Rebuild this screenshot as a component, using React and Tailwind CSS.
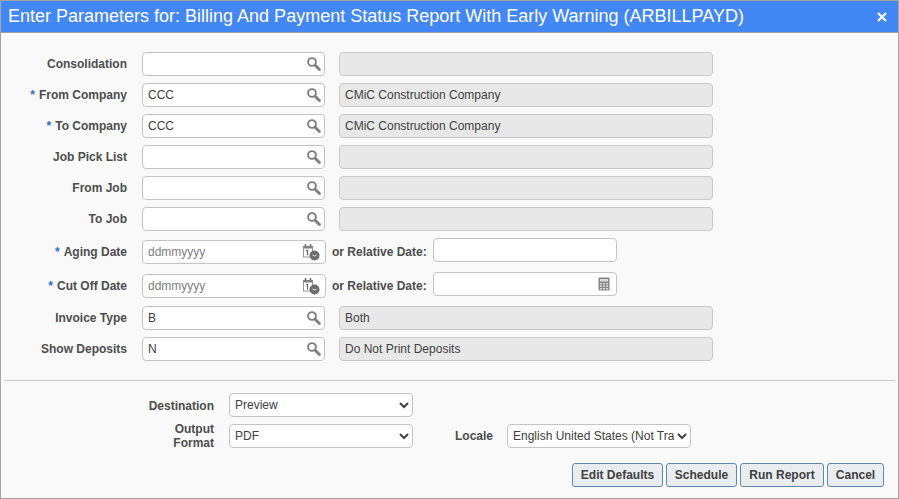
// Report parameter dialog: lookup fields, date fields, output options.
const LABEL = "text-[12px] leading-[14px] font-bold text-[#4d4d4d] text-right";
const FIELD = "h-[24px] bg-white border border-[#c4c4c4] rounded-[4px] flex items-center text-[12px] text-[#404040]";
const BTN = "h-[24px] bg-[#eaedf0] border border-[#5f88a8] rounded-[3px] text-[12px] font-bold text-[#404040] flex items-center justify-center";

const SearchIcon = () => (
  <svg width="14" height="14" viewBox="0 0 14 14" className="flex-shrink-0">
    <circle cx="5" cy="5" r="3.9" fill="none" stroke="#7d7d7d" strokeWidth="1.9"/>
    <path d="M8.2 8.2l4.2 4.2" stroke="#7d7d7d" strokeWidth="2.8" strokeLinecap="round"/>
  </svg>
);

const DateIcon = () => (
  <svg width="17" height="17" viewBox="0 0 17 17" className="flex-shrink-0">
    <rect x="0.5" y="2.5" width="9" height="10.5" fill="none" stroke="#949494" strokeWidth="1"/>
    <path d="M0.5 3.5h9" stroke="#808080" strokeWidth="2"/>
    <path d="M2.5 0v3M7.5 0v3" stroke="#6f6f6f" strokeWidth="1.6"/>
    <path d="M3 7l1.6-1v5.5" fill="none" stroke="#555" strokeWidth="1"/>
    <circle cx="11.5" cy="11.5" r="5" fill="#6e6e6e"/>
    <path d="M9.5 11l2 1 2-.7" fill="none" stroke="#e4e4e4" strokeWidth="1"/>
  </svg>
);

const CalcIcon = () => (
  <svg width="12" height="14" viewBox="0 0 12 14" className="flex-shrink-0">
    <rect x="0.5" y="0.5" width="11" height="13" rx="1" fill="#858585"/>
    <rect x="2" y="2" width="8" height="2.5" fill="#dcdcdc"/>
    <path d="M2 6h2v1.5H2zM5 6h2v1.5H5zM8 6h2v1.5H8zM2 8.5h2V10H2zM5 8.5h2V10H5zM8 8.5h2V10H8zM2 11h2v1.5H2zM5 11h2v1.5H5zM8 11h2v1.5H8z" fill="#dcdcdc"/>
  </svg>
);

const Label = ({ req, children }) => (
  <div className={"w-[126px] flex-shrink-0 " + LABEL}>
    {req && <span className="text-[#2f6fd0] mr-[4px]">*</span>}{children}
  </div>
);

const LookupRow = ({ label, req, value, desc, className }) => (
  <div className={"flex items-center " + (className || "")}>
    <Label req={req}>{label}</Label>
    <div className={"ml-[15px] w-[183px] pl-[5px] pr-[3px] justify-between " + FIELD}>
      <span>{value}</span>
      <SearchIcon/>
    </div>
    <div className="ml-[14px] w-[374px] h-[24px] bg-[#e8e8e8] border border-[#c9c9c9] rounded-[4px] flex items-center px-[5px] text-[12px] text-[#404040]">{desc}</div>
  </div>
);

const DateRow = ({ label, calc, className }) => (
  <div className={"flex items-center " + (className || "")}>
    <Label req>{label}</Label>
    <div className={"ml-[15px] w-[184px] pl-[5px] pr-[5px] justify-between " + FIELD}>
      <span className="text-[#808080]">ddmmyyyy</span>
      <DateIcon/>
    </div>
    <div className={"ml-[6px] w-[95px] " + LABEL + " !text-left"}>or Relative Date:</div>
    <div className={"ml-[6px] w-[184px] -mt-[4px] justify-end pr-[6px] " + FIELD}>
      {calc && <CalcIcon/>}
    </div>
  </div>
);

const Select = ({ value, options, className }) => (
  <select defaultValue={value} className={"w-[184px] h-[24px] bg-white border border-[#c4c4c4] rounded-[4px] pl-[1px] text-[12px] text-[#404040] " + (className || "")} style={{ fontFamily: '"Liberation Sans", Arial, sans-serif' }}>
    {options.map(o => <option key={o}>{o}</option>)}
  </select>
);

export default function App() {
  return (
    <div className="w-[899px] h-[499px] bg-[#f9f9f9] border border-[#a3a3a3] flex flex-col overflow-hidden font-['Liberation_Sans',Arial,sans-serif]">
      <div className="h-[32px] flex-shrink-0 bg-[#4387f4] border-b border-[#a0a0a0] flex items-center justify-between pl-[7px] pr-[11px]">
        <span className="text-[18px] text-white whitespace-nowrap">Enter Parameters for: Billing And Payment Status Report With Early Warning (ARBILLPAYD)</span>
        <svg width="10" height="10" viewBox="0 0 10 10"><path d="M1 1l8 8M9 1l-8 8" stroke="#fff" strokeWidth="2.2"/></svg>
      </div>

      <div className="flex flex-col pt-[19px]">
        <LookupRow label="Consolidation"/>
        <LookupRow label="From Company" req value="CCC" desc="CMiC Construction Company" className="mt-[7px]"/>
        <LookupRow label="To Company" req value="CCC" desc="CMiC Construction Company" className="mt-[7px]"/>
        <LookupRow label="Job Pick List" className="mt-[7px]"/>
        <LookupRow label="From Job" className="mt-[7px]"/>
        <LookupRow label="To Job" className="mt-[7px]"/>
        <DateRow label="Aging Date" className="mt-[9px]"/>
        <DateRow label="Cut Off Date" calc className="mt-[10px]"/>
        <LookupRow label="Invoice Type" value="B" desc="Both" className="mt-[8px]"/>
        <LookupRow label="Show Deposits" value="N" desc="Do Not Print Deposits" className="mt-[7px]"/>
      </div>

      <div className="mt-[19px] mx-[3px] border-t border-[#c8c8c8]"/>

      <div className="flex items-center mt-[12px]">
        <div className={"w-[213px] flex-shrink-0 pt-[2px] " + LABEL}>Destination</div>
        <Select value="Preview" options={["Preview", "Print", "Email"]} className="ml-[15px]"/>
      </div>
      <div className="flex items-center mt-[5px]">
        <div className={"w-[213px] flex-shrink-0 " + LABEL}>Output<br/>Format</div>
        <Select value="PDF" options={["PDF", "Excel", "HTML"]} className="ml-[15px]"/>
        <div className={"ml-[41px] w-[39px] " + LABEL}>Locale</div>
        <Select value="English United States (Not Translated)" options={["English United States (Not Translated)"]} className="ml-[14px]"/>
      </div>

      <div className="flex justify-end gap-[3px] mt-[13px] pr-[14px]">
        <button className={"w-[91px] " + BTN}>Edit Defaults</button>
        <button className={"w-[71px] " + BTN}>Schedule</button>
        <button className={"w-[84px] " + BTN}>Run Report</button>
        <button className={"w-[57px] " + BTN}>Cancel</button>
      </div>
    </div>
  );
}
